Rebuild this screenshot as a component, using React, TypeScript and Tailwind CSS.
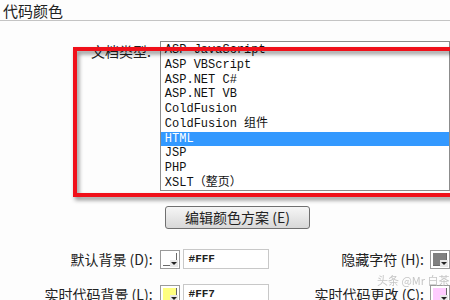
import React from 'react'

const ITEMS = [
  'ASP JavaScript',
  'ASP VBScript',
  'ASP.NET C#',
  'ASP.NET VB',
  'ColdFusion',
  'ColdFusion 组件',
  'HTML',
  'JSP',
  'PHP',
  'XSLT（整页）',
]

const cjk = { fontFamily: '"Noto Sans CJK SC", "Noto Sans", sans-serif' }
const mono = { fontFamily: '"Liberation Mono", "Noto Sans CJK SC", monospace' }

function Swatch({ color }: { color: string }) {
  return (
    <div className="relative w-[20px] h-[19px] border border-[#9a9a9a] bg-white shrink-0">
      <div className="absolute inset-[2px] border-r border-b border-[#6a6a6a]" style={{ background: color }} />
      <div className="absolute right-[1px] bottom-[1px] w-[8px] h-[7px] bg-[#e8e8e8] flex items-center justify-center">
        <div className="w-0 h-0 border-l-[3px] border-r-[3px] border-t-[3px] border-l-transparent border-r-transparent border-t-[#222]" />
      </div>
    </div>
  )
}

function ColorField({ color, value }: { color: string; value: string }) {
  return (
    <div className="flex items-center gap-[3px]">
      <Swatch color={color} />
      <div className="w-[86px] h-[20px] border border-[#c8c8c8] bg-white flex items-center pl-[5px]">
        <span className="text-[11px] font-bold text-[#222]" style={mono}>{value}</span>
      </div>
    </div>
  )
}

export default function App() {
  return (
    <div className="relative w-[450px] h-[300px] overflow-hidden bg-[#fdfdfd] text-[#222]" style={cjk}>
      <div className="h-[21px] border-b border-[#c4c4c4] pl-[3px] flex items-end">
        <span className="text-[15px] leading-[19px]">代码颜色</span>
      </div>

      <div className="flex mt-[20px]">
        <div className="w-[165px] pr-[9px] text-right text-[14px] leading-[18px] pt-[1px]">文档类型:</div>
        <div className="w-[300px] h-[150px] border border-[#8c8c8c] bg-white pt-[1px]">
          {ITEMS.map(it => (
            <div
              key={it}
              className={`h-[14.75px] leading-[14.75px] text-[12px] pl-[4px] whitespace-nowrap ${it === 'HTML' ? 'bg-[#3399ff] text-white' : 'text-[#111]'}`}
              style={mono}
            >
              {it}
            </div>
          ))}
        </div>
      </div>

      <div className="pl-[165px] mt-[13px]">
        <button className="w-[145px] h-[23px] rounded-[3px] border border-[#707070] bg-gradient-to-b from-[#f6f6f6] to-[#d8d8d8] text-[14px] leading-[20px] text-[#222]" style={cjk}>
          编辑颜色方案 (E)
        </button>
      </div>

      <div className="flex flex-col gap-[14px] mt-[20px]">
        <div className="flex items-center">
          <div className="w-[165px] pr-[7px] text-right text-[14px]">默认背景 (D):</div>
          <ColorField color="#ffffff" value="#FFF" />
          <div className="w-[167px] pr-[6px] text-right text-[14px]">隐藏字符 (H):</div>
          <Swatch color="#808080" />
        </div>
        <div className="flex items-center">
          <div className="w-[165px] pr-[7px] text-right text-[14px]">实时代码背景 (L):</div>
          <ColorField color="#ffff80" value="#FF7" />
          <div className="w-[167px] pr-[6px] text-right text-[14px]">实时代码更改 (C):</div>
          <Swatch color="#ffccff" />
        </div>
      </div>

      {/* red annotation box */}
      <div className="absolute left-[73px] top-[47px] w-[400px] h-[150px] border-[4px] border-[#f0101a] drop-shadow-[2px_3px_2px_rgba(0,0,0,0.45)]" />

      {/* watermark */}
      <div className="absolute left-[377px] top-[272px] text-[11px] text-[#b8b8b8] opacity-80 whitespace-nowrap">头条 @Mr 白茶</div>
    </div>
  )
}
